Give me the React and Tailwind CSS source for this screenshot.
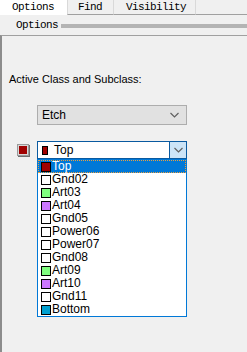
import React from 'react'

const LAYERS = [
  { name: 'Top', color: '#a00000' },
  { name: 'Gnd02', color: '#ffffff' },
  { name: 'Art03', color: '#80ff80' },
  { name: 'Art04', color: '#cc77ff' },
  { name: 'Gnd05', color: '#ffffff' },
  { name: 'Power06', color: '#ffffff' },
  { name: 'Power07', color: '#ffffff' },
  { name: 'Gnd08', color: '#ffffff' },
  { name: 'Art09', color: '#80ff80' },
  { name: 'Art10', color: '#cc77ff' },
  { name: 'Gnd11', color: '#ffffff' },
  { name: 'Bottom', color: '#00a0d0' },
]

function Chevron() {
  return (
    <svg width="9" height="6" viewBox="0 0 9 6" className="block">
      <path d="M0.5 1 L4.5 5 L8.5 1" fill="none" stroke="#606060" strokeWidth="1.2" />
    </svg>
  )
}

export default function App() {
  const tab = "font-['Liberation_Mono',monospace] text-[11px] tracking-[-0.6px] text-black"
  return (
    <div className="w-[247px] h-[352px] bg-[#f0f0f0] flex flex-col overflow-hidden font-['Liberation_Sans',Arial,sans-serif]">
      {/* tabs */}
      <div className="flex h-[15px] shrink-0">
        <div className={`w-[67px] bg-white pl-[12px] leading-[14px] ${tab}`}>Options</div>
        <div className={`w-[46px] border-l border-b border-[#d9d9d9] border-b-[#a0a0a0] pl-[10px] leading-[14px] ${tab}`}>Find</div>
        <div className={`w-[82px] border-l border-b border-[#d9d9d9] border-b-[#a0a0a0] pl-[12px] leading-[14px] ${tab}`}>Visibility</div>
        <div className="flex-1 border-l border-b border-[#d9d9d9] border-b-[#a0a0a0]" />
      </div>

      {/* group header */}
      <div className="flex items-center h-[20px] shrink-0 pl-[16px]">
        <span className={tab}>Options</span>
        <div className="flex-1 h-[4px] bg-[#b4b4b4] ml-[3px] mt-[2px]" />
      </div>

      {/* panel */}
      <div className="flex-1 border-t border-l-2 border-[#a0a0a0] border-l-[#8c8c8c] pl-[7px]">
        <div className="mt-[37px] text-[11px] leading-[13px] text-black">Active Class and Subclass:</div>

        <div className="mt-[19px] ml-[28px] w-[150px] h-[20px] border border-[#adadad] bg-[#e1e1e1] flex items-center justify-between pl-[4px] pr-[7px]">
          <span className="text-[12px] leading-[14px] text-black">Etch</span>
          <Chevron />
        </div>

        <div className="mt-[16px] flex items-start">
          <div className="mt-[3px] ml-[8px] w-[12px] h-[12px] border border-[#9a9a9a] bg-[#d8d8d8] p-[1px] shadow-[1px_1px_0_#707070]">
            <div className="w-full h-full bg-[#a00000]" />
          </div>
          <div className="ml-[8px] w-[150px] flex flex-col">
            <div className="h-[18px] border border-[#0a5aa0] bg-white flex">
              <div className="flex-1 flex items-center pl-[4px] gap-[6px]">
                <div className="w-[6px] h-[9px] border border-black bg-[#a00000]" />
                <span className="text-[12px] leading-[14px] text-black">Top</span>
              </div>
              <div className="w-[17px] bg-[#cce4f7] border-l border-[#0a5aa0] flex items-center justify-center">
                <Chevron />
              </div>
            </div>
            <div className="border border-[#0078d7] bg-white">
              {LAYERS.map((l, i) => (
                <div
                  key={l.name}
                  className={
                    i === 0
                      ? 'h-[13px] flex items-center pl-[2px] gap-[1px] bg-[#0078d7] border border-dotted border-[#e8a040]'
                      : 'h-[13px] flex items-center pl-[3px] gap-[1px]'
                  }
                >
                  <div className="w-[10px] h-[10px] border border-black shrink-0" style={{ background: l.color }} />
                  <span className={`text-[12px] leading-[13px] ${i === 0 ? 'text-white' : 'text-black'}`}>{l.name}</span>
                </div>
              ))}
            </div>
          </div>
        </div>
      </div>
    </div>
  )
}
